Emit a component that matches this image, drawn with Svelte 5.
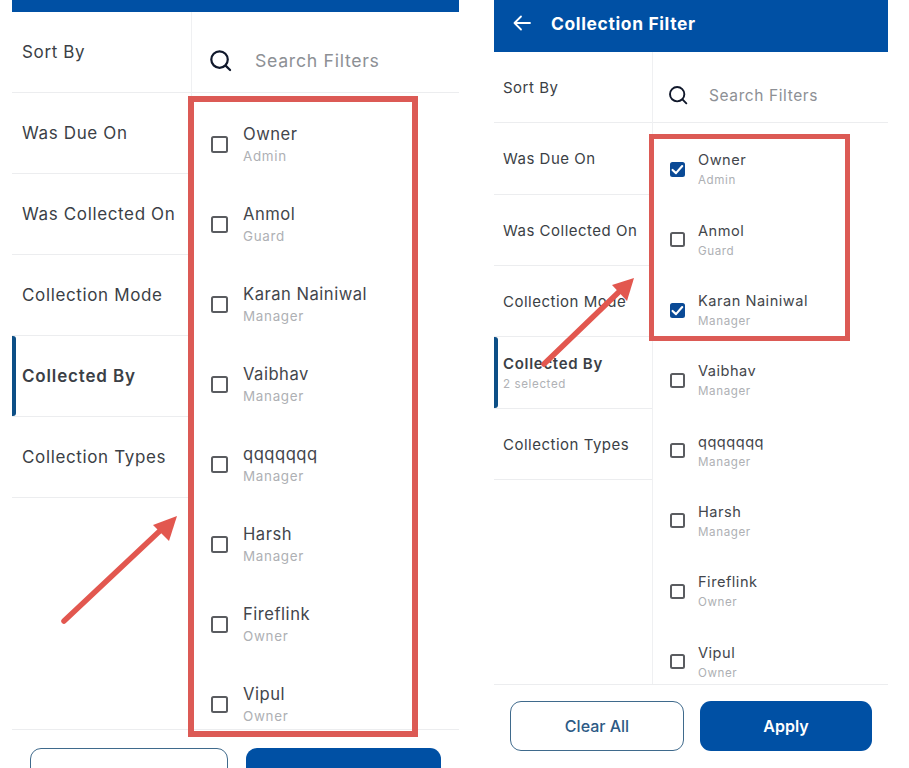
<script>
  const filters = ['Sort By', 'Was Due On', 'Was Collected On', 'Collection Mode', 'Collected By', 'Collection Types'];

  const people = [
    { name: 'Owner', role: 'Admin' },
    { name: 'Anmol', role: 'Guard' },
    { name: 'Karan Nainiwal', role: 'Manager' },
    { name: 'Vaibhav', role: 'Manager' },
    { name: 'qqqqqqq', role: 'Manager' },
    { name: 'Harsh', role: 'Manager' },
    { name: 'Fireflink', role: 'Owner' },
    { name: 'Vipul', role: 'Owner' }
  ];

  const before = { cls: 'before', selected: [], showTitle: false };
  const after = { cls: 'after', selected: ['Owner', 'Karan Nainiwal'], showTitle: true };
</script>

{#snippet phone(p)}
  <section class="phone {p.cls}">
    <header class="topbar">
      {#if p.showTitle}
        <svg class="back" viewBox="0 0 18 16" fill="none" stroke="#fff" stroke-width="1.8" stroke-linecap="round" stroke-linejoin="round">
          <path d="M17 8H1.5M8 1.5 1.5 8 8 14.5" />
        </svg>
        <h1>Collection Filter</h1>
      {/if}
    </header>

    <div class="body">
      <nav class="filters">
        {#each filters as f}
          <div class="filter" class:active={f === 'Collected By'}>
            <span class="filter-name">{f}</span>
            {#if f === 'Collected By' && p.selected.length}
              <span class="filter-count">{p.selected.length} selected</span>
            {/if}
          </div>
        {/each}
      </nav>

      <div class="content">
        <div class="search">
          <svg class="search-icon" viewBox="0 0 24 24" fill="none" stroke="#10182b" stroke-width="2.3" stroke-linecap="round">
            <circle cx="11" cy="11" r="8.6" />
            <path d="M17.6 17.6 22 22" />
          </svg>
          <span class="placeholder">Search Filters</span>
        </div>
        <div class="list">
          {#each people as person}
            <div class="person">
              <span class="box" class:checked={p.selected.includes(person.name)}>
                {#if p.selected.includes(person.name)}
                  <svg viewBox="0 0 14 14" fill="none" stroke="#fff" stroke-width="2" stroke-linecap="round" stroke-linejoin="round">
                    <path d="M2.4 7.4 5.6 10.4 11.4 3.8" />
                  </svg>
                {/if}
              </span>
              <div class="person-text">
                <span class="person-name">{person.name}</span>
                <span class="person-role">{person.role}</span>
              </div>
            </div>
          {/each}
        </div>
      </div>
    </div>

    <footer class="actions">
      <button class="btn clear">Clear All</button>
      <button class="btn apply">Apply</button>
    </footer>
  </section>
{/snippet}

<main class="page">
  {@render phone(before)}
  {@render phone(after)}

  <!-- annotations drawn over the screenshots -->
  <div class="mark mark-left"></div>
  <div class="mark mark-right"></div>
  <svg class="arrows" viewBox="0 0 909 768" fill="none">
    <path d="M64 621 164 527" stroke="#e2574f" stroke-width="5.5" stroke-linecap="round" />
    <path d="M177 516 153 525 169 541Z" fill="#e2574f" />
    <path d="M544 364 623 288" stroke="#e2574f" stroke-width="5.5" stroke-linecap="round" />
    <path d="M634 278 612 285 627 301Z" fill="#e2574f" />
  </svg>
</main>

<style>
  :global(body) { background: #fff; }

  .page {
    position: relative;
    display: flex;
    gap: 35px;
    width: 909px;
    height: 768px;
    padding-left: 12px;
    box-sizing: border-box;
    overflow: hidden;
    font-family: Inter, "Liberation Sans", sans-serif;
    color: #3b3f46;
  }

  .phone {
    display: flex;
    flex-direction: column;
    flex: none;
    height: 768px;
  }

  /* sizes of the two screenshots differ, they are scaled differently */
  .before {
    width: 447px;
    --bar: 12px;
    --body: 717px;
    --nav: 180px;
    --row: 81px;
    --pad: 10px;
    --label: 17px;
    --label-sp: 0.64px;
    --name: 16.6px;
    --sub: 13.4px;
    --sub-sp: 0.7px;
    --item: 80px;
    --box: 17px;
    --search-top: 16px;
    --row-top: 0px;
    --foot-pad: 18px;
    --btn-h: 56px;
  }
  .after {
    width: 394px;
    --bar: 52px;
    --body: 632px;
    --nav: 159px;
    --row: 71.33px;
    --pad: 9px;
    --label: 15px;
    --label-sp: 0.5px;
    --name: 14.6px;
    --sub: 11.6px;
    --sub-sp: 0.6px;
    --item: 70.3px;
    --box: 15px;
    --search-top: 16px;
    --row-top: 1px;
    --foot-pad: 16px;
    --btn-h: 50px;
  }

  .topbar {
    flex: none;
    height: var(--bar);
    box-sizing: border-box;
    background: #0050a4;
    display: flex;
    align-items: center;
    color: #fff;
  }
  .after .topbar { padding-bottom: 6px; }
  .back { width: 18px; height: 16px; margin-left: 19px; }
  h1 {
    margin: 0 0 0 20px;
    font-size: 17.4px;
    font-weight: 700;
    letter-spacing: 0.65px;
  }

  .body {
    flex: none;
    height: var(--body);
    display: flex;
    overflow: hidden;
  }

  .filters {
    flex: none;
    width: var(--nav);
    box-sizing: border-box;
    border-right: 1px solid #eff0f2;
  }
  .filter {
    position: relative;
    height: var(--row);
    box-sizing: border-box;
    border-bottom: 1px solid #ecedef;
    padding-left: var(--pad);
    padding-top: var(--row-top);
    display: flex;
    flex-direction: column;
    justify-content: center;
    gap: 4px;
  }
  .filter-name {
    font-size: var(--label);
    letter-spacing: var(--label-sp);
    white-space: nowrap;
  }
  .filter-count {
    font-size: var(--sub);
    letter-spacing: var(--sub-sp);
    color: #b0b2b6;
  }
  .filter.active .filter-name {
    font-weight: 600;
    letter-spacing: calc(var(--label-sp) + 0.2px);
  }
  .filter.active::before {
    content: '';
    position: absolute;
    left: 0;
    top: 0;
    bottom: 0;
    width: 4px;
    background: #0d4f86;
    border-radius: 0 3px 3px 0;
  }

  .content { flex: 1; min-width: 0; }

  .search {
    height: var(--row);
    box-sizing: border-box;
    border-bottom: 1px solid #ecedef;
    padding-top: var(--search-top);
    display: flex;
    align-items: center;
  }
  .search-icon { flex: none; }
  .before .search-icon { width: 23px; height: 23px; margin: 0 23px 0 17px; }
  .after .search-icon { width: 20px; height: 20px; margin: 0 21px 0 15px; }
  .placeholder { color: #8d9095; letter-spacing: 0.7px; }
  .before .placeholder { font-size: 17.7px; }
  .after .placeholder { font-size: 15.5px; letter-spacing: 0.6px; }

  .list { padding-top: 11px; }

  .person {
    height: var(--item);
    display: flex;
    align-items: center;
  }
  .before .person { padding-left: 19px; gap: 15px; }
  .after .person { padding-left: 17px; gap: 13px; }

  .box {
    flex: none;
    width: var(--box);
    height: var(--box);
    box-sizing: border-box;
    border: 2px solid #5a5c60;
    border-radius: 2.5px;
    display: flex;
  }
  .box.checked { background: #0a4a96; border-color: #0a4a96; }
  .box svg { width: 15px; height: 15px; margin: -2px; flex: none; }

  .person-text { display: flex; flex-direction: column; gap: 4px; }
  .person-name {
    font-size: var(--name);
    letter-spacing: 0.5px;
    color: #43464c;
  }
  .person-role {
    font-size: var(--sub);
    letter-spacing: var(--sub-sp);
    color: #aeb0b4;
  }

  .actions {
    flex: none;
    border-top: 1px solid #ecedef;
    padding: var(--foot-pad);
    display: flex;
    gap: var(--foot-pad);
  }
  .btn {
    flex: 1;
    height: var(--btn-h);
    border-radius: 11px;
    font-family: inherit;
    font-size: 16px;
  }
  .clear {
    background: #fff;
    border: 1px solid #3f6a8c;
    color: #2d5a85;
    font-weight: 500;
  }
  .apply {
    background: #0050a4;
    border: none;
    color: #fff;
    font-weight: 600;
  }

  .mark {
    position: absolute;
    box-sizing: border-box;
    border-style: solid;
    border-color: #dc5a55;
  }
  .mark-left { left: 188px; top: 96px; width: 230px; height: 641px; border-width: 6px; }
  .mark-right { left: 649px; top: 134px; width: 201px; height: 207px; border-width: 5px; }

  .arrows {
    position: absolute;
    inset: 0;
    width: 909px;
    height: 768px;
    pointer-events: none;
  }
</style>
